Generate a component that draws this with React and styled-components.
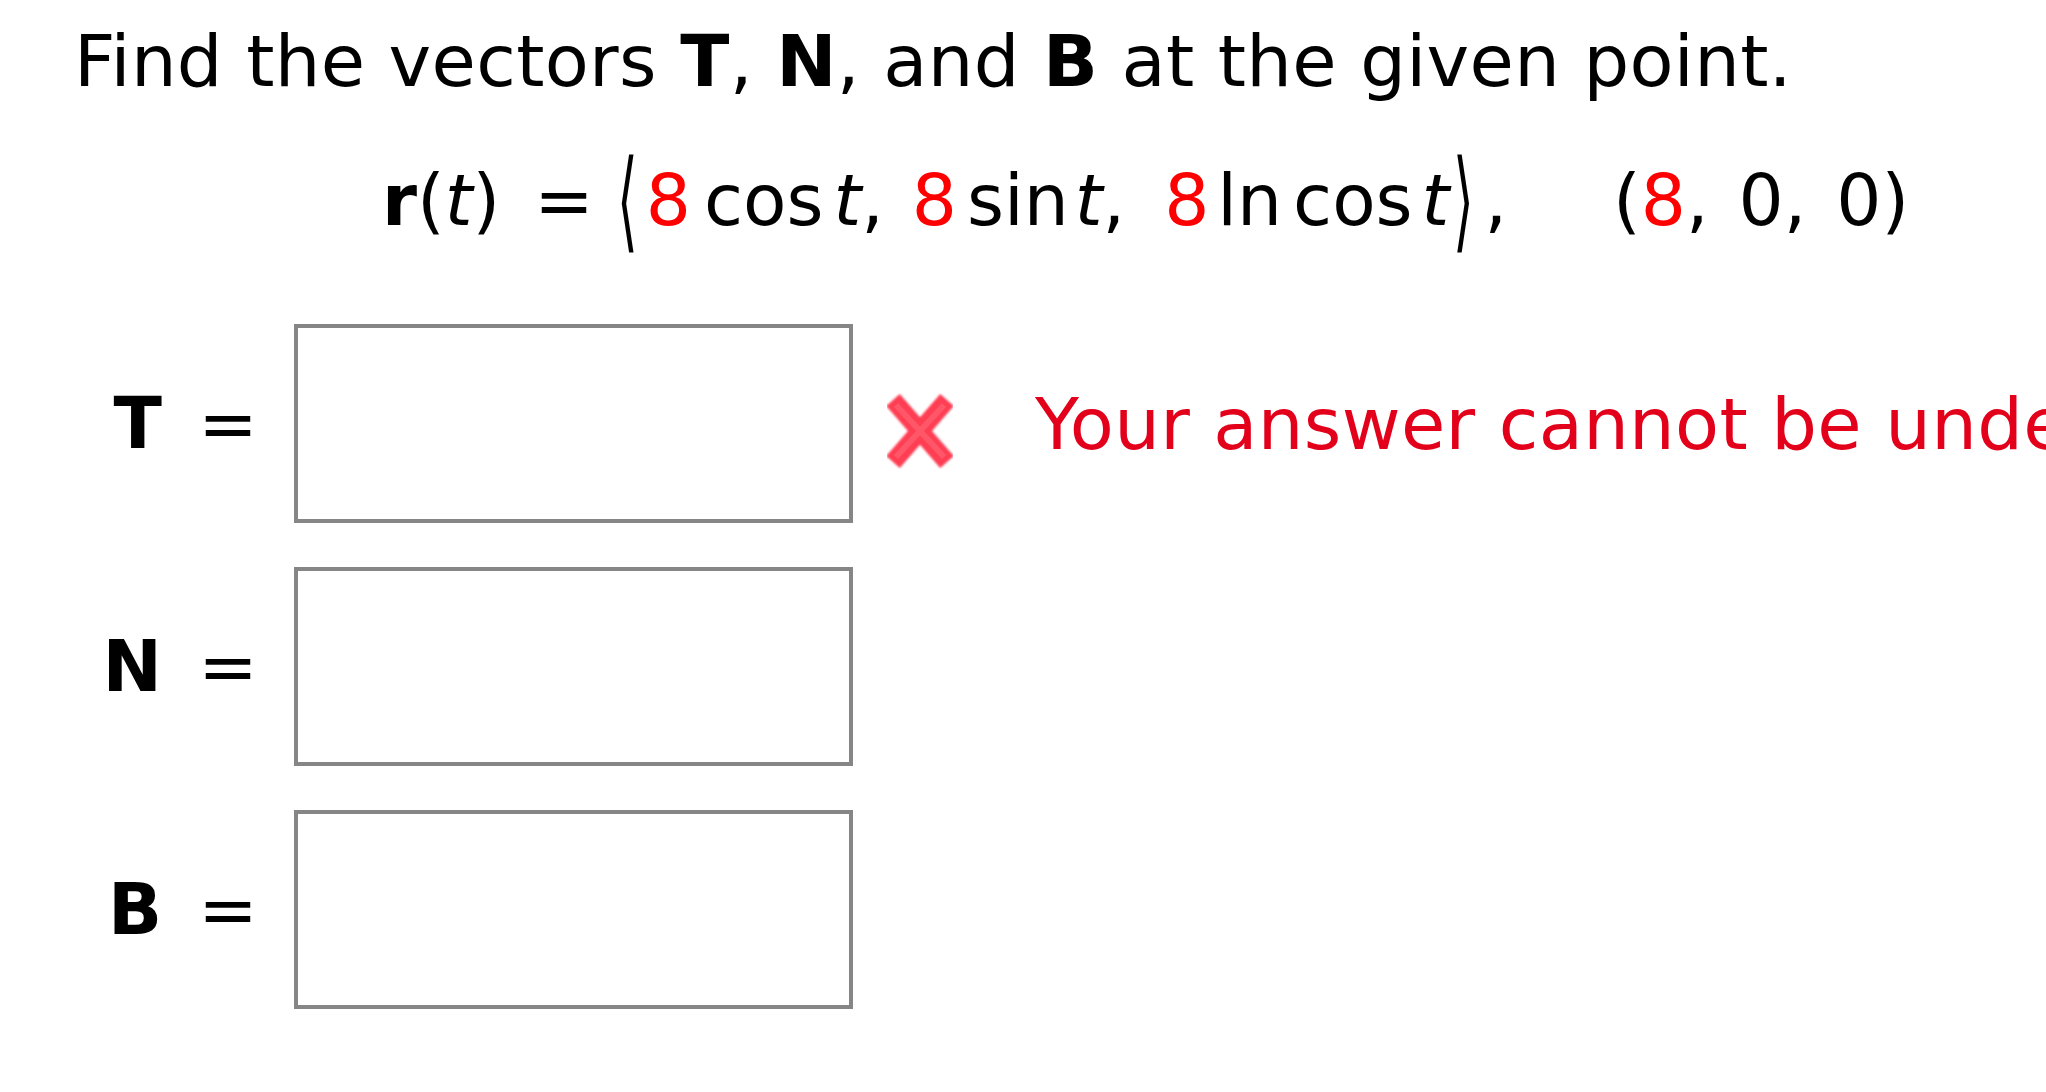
import styled, { createGlobalStyle } from "styled-components";

const GlobalStyle = createGlobalStyle`
  html, body {
    margin: 0;
    padding: 0;
    background: #fff;
    overflow: hidden;
  }
  body {
    font-family: "DejaVu Sans", Verdana, sans-serif;
    color: #000;
  }
`;

const Page = styled.div`
  width: 2046px;
  height: 1092px;
  overflow: hidden;
  padding: 20px 0 0 74px;
  box-sizing: border-box;
  font-size: 71px;
`;

const Prompt = styled.div`
  font-size: 72px;
  letter-spacing: 0.35px;
  line-height: 83px;
  white-space: nowrap;
`;

const MathRow = styled.div`
  display: flex;
  align-items: center;
  white-space: nowrap;
  margin: 47px 0 0 308px;
  height: 100px;
  line-height: 1;
`;

const Red = styled.span`
  color: #ff0000;
`;

const Var = styled.span`
  font-style: italic;
  margin-left: ${(p) => p.$pre || 0}px;
`;

const Fn = styled.span`
  margin-left: ${(p) => p.$pre || 0}px;
`;

const Bracket = styled.span`
  display: inline-block;
  font-weight: 200;
  transform: scale(0.75, 1.55);
  margin: 0 ${(p) => p.$right || 0}px 0 ${(p) => p.$left || 0}px;
`;

const Gap = styled.span`
  display: inline-block;
  width: ${(p) => p.$w}px;
`;

const Answers = styled.div`
  display: flex;
  flex-direction: column;
  gap: 44px;
  margin-top: 74px;
`;

const Row = styled.div`
  display: grid;
  grid-template-columns: 88px 132px 559px auto;
  align-items: center;
`;

const Label = styled.b`
  text-align: right;
  font-weight: bold;
`;

const Equals = styled.span`
  text-align: center;
`;

const Box = styled.input`
  box-sizing: border-box;
  width: 559px;
  height: 199px;
  border: 4px solid #868686;
  background: #fff;
  margin: 0;
  outline: none;
`;

const Feedback = styled.div`
  display: flex;
  align-items: center;
  gap: 76px;
  margin-left: 28px;
  white-space: nowrap;
  font-size: 72px;
  letter-spacing: 0.35px;
`;

const IconSlot = styled.span`
  display: flex;
  flex: none;
  margin-top: 14px;
`;

const ErrorText = styled.span`
  color: #e3001b;
`;

const CrossIcon = () => (
  <IconSlot>
    <svg width="78" height="76" viewBox="0 0 78 76">
      <defs>
        <filter id="soft" x="-10%" y="-10%" width="120%" height="120%">
          <feGaussianBlur stdDeviation="1.3" />
        </filter>
      </defs>
      <g filter="url(#soft)" stroke="#ff3d52" strokeWidth="18" strokeLinecap="butt">
        <line x1="12" y1="7" x2="66" y2="69" />
        <line x1="66" y1="7" x2="12" y2="69" />
      </g>
      <g stroke="#ff6b7a" strokeWidth="6" opacity="0.55">
        <line x1="15" y1="12" x2="63" y2="64" />
        <line x1="63" y1="12" x2="15" y2="64" />
      </g>
    </svg>
  </IconSlot>
);

const rows = [
  { label: "T", error: "Your answer cannot be understood or graded. More Information" },
  { label: "N" },
  { label: "B" },
];

export default function App() {
  return (
    <>
      <GlobalStyle />
      <Page>
        <Prompt>
          Find the vectors <b>T</b>, <b>N</b>, and <b>B</b> at the given point.
        </Prompt>
        <MathRow>
          <b>r</b>(<Var>t</Var>)<Gap $w={34} />=<Gap $w={28} />
          <Bracket $left={-9} $right={5}>⟨</Bracket>
          <Red>8</Red>
          <Fn $pre={13}>cos</Fn>
          <Var $pre={10}>t</Var>,<Gap $w={28} />
          <Red>8</Red>
          <Fn $pre={10}>sin</Fn>
          <Var $pre={6}>t</Var>,<Gap $w={39} />
          <Red>8</Red>
          <Fn $pre={8}>ln</Fn>
          <Fn $pre={11}>cos</Fn>
          <Var $pre={9}>t</Var>
          <Bracket $left={0} $right={7}>⟩</Bracket>,<Gap $w={106} />
          (<Red>8</Red>,<Gap $w={30} />0,<Gap $w={30} />0)
        </MathRow>
        <Answers>
          {rows.map((r) => (
            <Row key={r.label}>
              <Label>{r.label}</Label>
              <Equals>=</Equals>
              <Box type="text" aria-label={r.label} />
              {r.error && (
                <Feedback>
                  <CrossIcon />
                  <ErrorText>{r.error}</ErrorText>
                </Feedback>
              )}
            </Row>
          ))}
        </Answers>
      </Page>
    </>
  );
}
